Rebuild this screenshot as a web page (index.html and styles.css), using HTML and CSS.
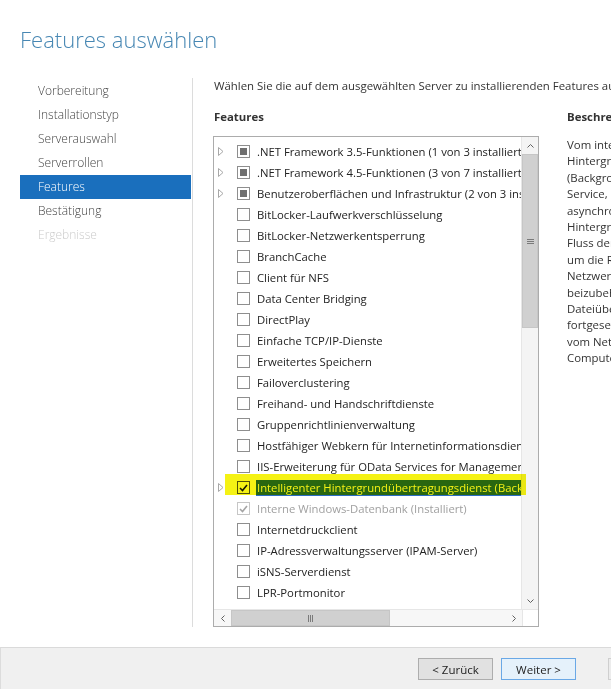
FILE: index.html
```html
<!DOCTYPE html>
<html lang="de">
<head>
<meta charset="utf-8">
<title>Features auswählen</title>
<link rel="stylesheet" href="styles.css">
</head>
<body>
<div class="page">
  <h1 class="title">Features auswählen</h1>
  <div class="main">
    <nav class="nav">
      <div class="nav-item">Vorbereitung</div>
      <div class="nav-item">Installationstyp</div>
      <div class="nav-item">Serverauswahl</div>
      <div class="nav-item">Serverrollen</div>
      <div class="nav-item active">Features</div>
      <div class="nav-item">Bestätigung</div>
      <div class="nav-item disabled">Ergebnisse</div>
    </nav>
    <section class="content">
      <p class="intro">Wählen Sie die auf dem ausgewählten Server zu installierenden Features aus.</p>
      <div class="columns">
        <div class="features-col">
          <div class="col-head">Features</div>
          <div class="listbox">
            <div class="list-area">
              <div class="rows">
                <div class="row"><span class="exp"><svg width="6" height="9" viewBox="0 0 6 9"><polygon points="0.5,0.5 5,4.5 0.5,8.5" fill="none" stroke="#a8a8a8"/></svg></span><span class="cb ind"></span><span class="label">.NET Framework 3.5-Funktionen (1 von 3 installiert)</span></div>
                <div class="row"><span class="exp"><svg width="6" height="9" viewBox="0 0 6 9"><polygon points="0.5,0.5 5,4.5 0.5,8.5" fill="none" stroke="#a8a8a8"/></svg></span><span class="cb ind"></span><span class="label">.NET Framework 4.5-Funktionen (3 von 7 installiert)</span></div>
                <div class="row"><span class="exp"><svg width="6" height="9" viewBox="0 0 6 9"><polygon points="0.5,0.5 5,4.5 0.5,8.5" fill="none" stroke="#a8a8a8"/></svg></span><span class="cb ind"></span><span class="label">Benutzeroberflächen und Infrastruktur (2 von 3 installiert)</span></div>
                <div class="row"><span class="exp"></span><span class="cb"></span><span class="label">BitLocker-Laufwerkverschlüsselung</span></div>
                <div class="row"><span class="exp"></span><span class="cb"></span><span class="label">BitLocker-Netzwerkentsperrung</span></div>
                <div class="row"><span class="exp"></span><span class="cb"></span><span class="label">BranchCache</span></div>
                <div class="row"><span class="exp"></span><span class="cb"></span><span class="label">Client für NFS</span></div>
                <div class="row"><span class="exp"></span><span class="cb"></span><span class="label">Data Center Bridging</span></div>
                <div class="row"><span class="exp"></span><span class="cb"></span><span class="label">DirectPlay</span></div>
                <div class="row"><span class="exp"></span><span class="cb"></span><span class="label">Einfache TCP/IP-Dienste</span></div>
                <div class="row"><span class="exp"></span><span class="cb"></span><span class="label">Erweitertes Speichern</span></div>
                <div class="row"><span class="exp"></span><span class="cb"></span><span class="label">Failoverclustering</span></div>
                <div class="row"><span class="exp"></span><span class="cb"></span><span class="label">Freihand- und Handschriftdienste</span></div>
                <div class="row"><span class="exp"></span><span class="cb"></span><span class="label">Gruppenrichtlinienverwaltung</span></div>
                <div class="row"><span class="exp"></span><span class="cb"></span><span class="label">Hostfähiger Webkern für Internetinformationsdienste</span></div>
                <div class="row"><span class="exp"></span><span class="cb"></span><span class="label">IIS-Erweiterung für OData Services for Management</span></div>
                <div class="row selected"><span class="exp"><svg width="6" height="9" viewBox="0 0 6 9"><polygon points="0.5,0.5 5,4.5 0.5,8.5" fill="none" stroke="#a8a8a8"/></svg></span><span class="cb on"><svg width="9" height="8" viewBox="0 0 9 8"><polyline points="1,4 3.5,6.5 8,1" fill="none" stroke="#1a1a1a" stroke-width="1.6"/></svg></span><span class="label sel">Intelligenter Hintergrundübertragungsdienst (Background Intelligent Transfer Service)</span></div>
                <div class="row disabled"><span class="exp"></span><span class="cb on"><svg width="9" height="8" viewBox="0 0 9 8"><polyline points="1,4 3.5,6.5 8,1" fill="none" stroke="#a4a4a4" stroke-width="1.6"/></svg></span><span class="label">Interne Windows-Datenbank (Installiert)</span></div>
                <div class="row"><span class="exp"></span><span class="cb"></span><span class="label">Internetdruckclient</span></div>
                <div class="row"><span class="exp"></span><span class="cb"></span><span class="label">IP-Adressverwaltungsserver (IPAM-Server)</span></div>
                <div class="row"><span class="exp"></span><span class="cb"></span><span class="label">iSNS-Serverdienst</span></div>
                <div class="row"><span class="exp"></span><span class="cb"></span><span class="label">LPR-Portmonitor</span></div>
              </div>
              <div class="vscroll">
                <div class="sb-btn"><svg width="7" height="4" viewBox="0 0 7 4"><polyline points="0.5,3.5 3.5,0.5 6.5,3.5" fill="none" stroke="#606060"/></svg></div>
                <div class="vthumb"><svg width="7" height="5" viewBox="0 0 7 5"><path d="M0 0.5H7M0 2.5H7M0 4.5H7" stroke="#7a7a7a"/></svg></div>
                <div class="vtrack"></div>
                <div class="sb-btn"><svg width="7" height="4" viewBox="0 0 7 4"><polyline points="0.5,0.5 3.5,3.5 6.5,0.5" fill="none" stroke="#606060"/></svg></div>
              </div>
            </div>
            <div class="hscroll">
              <div class="sb-btn h"><svg width="4" height="7" viewBox="0 0 4 7"><polyline points="3.5,0.5 0.5,3.5 3.5,6.5" fill="none" stroke="#606060"/></svg></div>
              <div class="hthumb"><svg width="5" height="7" viewBox="0 0 5 7"><path d="M0.5 0V7M2.5 0V7M4.5 0V7" stroke="#7a7a7a"/></svg></div>
              <div class="htrack"></div>
              <div class="sb-btn h"><svg width="4" height="7" viewBox="0 0 4 7"><polyline points="0.5,0.5 3.5,3.5 0.5,6.5" fill="none" stroke="#606060"/></svg></div>
              <div class="corner"></div>
            </div>
            <div class="marker"></div>
          </div>
        </div>
        <div class="desc-col">
          <div class="col-head">Beschreibung</div>
          <div class="desc">
            <div>Vom intelligenten</div>
            <div>Hintergrundübertragungsdienst</div>
            <div>(Background Intelligent Transfer</div>
            <div>Service, BITS) werden Dateien</div>
            <div>asynchron im Vordergrund oder</div>
            <div>Hintergrund übertragen, der</div>
            <div>Fluss der Übertragungen gesteuert,</div>
            <div>um die Reaktionsfähigkeit anderer</div>
            <div>Netzwerkanwendungen</div>
            <div>beizubehalten, und</div>
            <div>Dateiübertragungen automatisch</div>
            <div>fortgesetzt, nachdem die Verbindung</div>
            <div>vom Netzwerk getrennt oder der</div>
            <div>Computer neu gestartet wurde.</div>
          </div>
        </div>
      </div>
    </section>
  </div>
  <footer class="footer">
    <button class="btn">&lt; Zurück</button>
    <button class="btn default">Weiter &gt;</button>
    <button class="btn install">Installieren</button>
    <button class="btn">Abbrechen</button>
  </footer>
</div>
</body>
</html>
```

FILE: styles.css
```css
* { box-sizing: border-box; }
html, body { margin: 0; padding: 0; }
body {
  width: 611px;
  height: 689px;
  overflow: hidden;
  background: #fff;
  font-family: "Open Sans", "Liberation Sans", sans-serif;
  color: #333;
}
.page {
  display: flex;
  flex-direction: column;
  width: 611px;
  height: 689px;
}
.title {
  margin: 23px 0 0 20px;
  height: 32px;
  font-size: 22px;
  font-weight: 300;
  line-height: 32px;
  color: #4787b3;
  white-space: nowrap;
}
.main {
  display: flex;
  margin-top: 23px;
  height: 549px;
}
.nav {
  flex: 0 0 193px;
  padding: 1px 1px 0 20px;
  border-right: 1px solid #dcdcdc;
}
.nav-item {
  height: 24px;
  line-height: 24px;
  padding-left: 18px;
  font-size: 12px;
  font-weight: 300;
  color: #444;
  white-space: nowrap;
}
.nav-item.active { background: #1a6fbd; color: #fff; }
.nav-item.disabled { color: #cbcbcb; }
.content {
  flex: 1;
  min-width: 0;
  padding-left: 20px;
}
.intro {
  margin: 0;
  padding-left: 1px;
  font-size: 11.4px;
  line-height: 16px;
  color: #333;
  white-space: nowrap;
}
.columns {
  display: flex;
  gap: 27px;
  margin-top: 15px;
}
.features-col { flex: 0 0 326px; }
.col-head {
  padding-left: 1px;
  font-size: 11.4px;
  font-weight: 700;
  line-height: 16px;
  color: #333;
  white-space: nowrap;
}
.listbox {
  position: relative;
  margin-top: 11px;
  width: 326px;
  height: 491px;
  border: 1px solid #acacac;
  display: flex;
  flex-direction: column;
  background: #fff;
}
.list-area {
  display: flex;
  height: 472px;
}
.rows {
  flex: 1;
  min-width: 0;
  padding-top: 4px;
  overflow: hidden;
}
.row {
  height: 21px;
  display: flex;
  align-items: center;
  padding-left: 4px;
  font-size: 11.3px;
  color: #222;
  white-space: nowrap;
}
.exp {
  flex: 0 0 19px;
  display: flex;
  align-items: center;
}
.cb {
  flex: 0 0 13px;
  width: 13px;
  height: 13px;
  margin-right: 7px;
  border: 1px solid #8e8e8e;
  background: #fff;
  display: flex;
  align-items: center;
  justify-content: center;
}
.cb.ind::after {
  content: "";
  width: 7px;
  height: 7px;
  background: #707070;
}
.label { line-height: 16px; }
.sel {
  flex: 1;
  margin-left: -1px;
  padding-left: 1px;
  background: #2a6cc4;
  color: #fff;
}
.row.selected .cb { border-color: #555; }
.row.disabled { color: #a0a0a0; }
.row.disabled .cb { border-color: #c6c6c6; }
.vscroll {
  flex: 0 0 17px;
  display: flex;
  flex-direction: column;
  background: #f4f4f4;
  border-left: 1px solid #e6e6e6;
}
.sb-btn {
  flex: 0 0 17px;
  display: flex;
  align-items: center;
  justify-content: center;
}
.vthumb {
  flex: 0 0 174px;
  background: #d0d0d0;
  border: 1px solid #c6c6c6;
  display: flex;
  align-items: center;
  justify-content: center;
}
.vtrack { flex: 1; }
.hscroll {
  flex: 0 0 17px;
  display: flex;
  background: #f7f7f7;
  border-top: 1px solid #e6e6e6;
}
.sb-btn.h { flex: 0 0 17px; }
.hthumb {
  flex: 0 0 159px;
  background: #d0d0d0;
  border: 1px solid #c6c6c6;
  display: flex;
  align-items: center;
  justify-content: center;
}
.htrack { flex: 1; }
.corner {
  flex: 0 0 16px;
  background: #fff;
  border-left: 1px solid #e6e6e6;
}
.marker {
  position: absolute;
  left: 11px;
  top: 337px;
  width: 301px;
  height: 21px;
  background: #f5f214;
  mix-blend-mode: multiply;
}
.desc-col { flex: 0 0 auto; }
.desc {
  margin-top: 12px;
  padding-left: 1px;
  font-size: 11.4px;
  line-height: 16.4px;
  color: #333;
  white-space: nowrap;
}
.footer {
  margin-top: 20px;
  height: 42px;
  border-top: 1px solid #dadada;
  border-left: 1px solid #dcdcdc;
  background: #f0f0f0;
  padding: 10px 0 0 417px;
  display: flex;
  gap: 8px;
  align-items: flex-start;
}
.btn {
  flex: 0 0 75px;
  width: 75px;
  height: 22px;
  padding: 0;
  border: 1px solid #adadad;
  background: #e1e1e1;
  font-family: inherit;
  font-size: 11.5px;
  color: #222;
  white-space: nowrap;
}
.btn.default { border-color: #6aa8e6; background: #e5f1fb; }
.btn.install { margin-left: 24px; color: #9a9a9a; background: #ececec; border-color: #cfcfcf; }
```
